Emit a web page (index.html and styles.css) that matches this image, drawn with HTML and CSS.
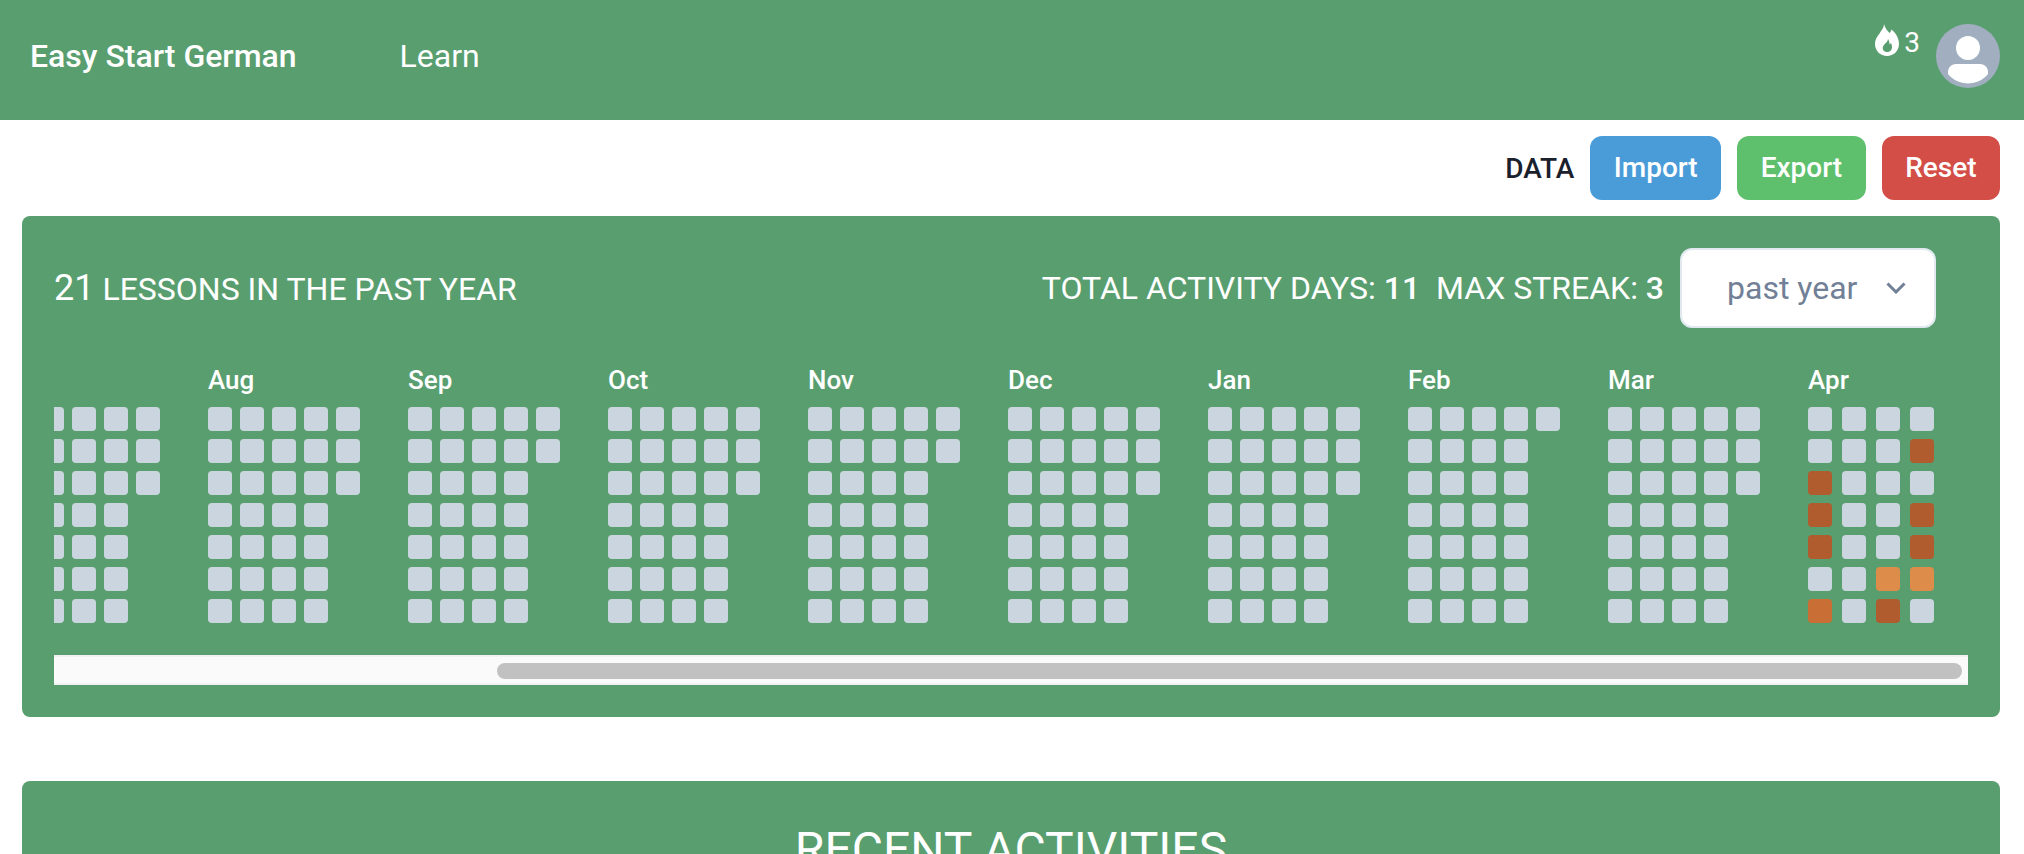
FILE: index.html
```html
<!DOCTYPE html>
<html lang="en">
<head>
  <meta charset="UTF-8" />
  <meta name="viewport" content="width=device-width, initial-scale=1.0"/>
  <title>Easy Start German</title>
  <link rel="stylesheet" href="styles.css">
</head>
<body>
  <header class="navbar">
    <div class="nav-left">
      <a class="brand">Easy Start German</a>
      <a class="nav-link">Learn</a>
    </div>
    <div class="nav-right">
      <div class="streak">
        <svg class="flame" viewBox="0 0 24 32" fill="#fff"><path fill-rule="evenodd" d="M9 0C10 4 12 6 14.500 9C15.500 8 16 7 16.500 5.500C20 8.500 24 13 24 20C24 27 18.500 32 12 32C5.500 32 0 27 0 20C0 14 4 11 6 7C7.500 5 9 3 9 0ZM13 15C13 18 9.500 19.500 8 22.500C7 25.500 9 28 12 28C15 28 17 26 17 23C17 21.500 16.500 20 15.800 19C15.400 19.800 15 20.200 14.500 20.500C14.500 18.500 14 16.500 13 15Z"/></svg>
        <span class="streak-count">3</span>
      </div>
      <div class="avatar">
        <svg viewBox="0 0 64 64"><circle cx="32" cy="24" r="12" fill="#fff"/><path fill="#fff" d="M20 40H44C49 40 52 44 52 48V50C47 56 40 59.500 32 59.500C24 59.500 17 56 12 50V48C12 44 15 40 20 40Z"/></svg>
      </div>
    </div>
  </header>

  <main class="content">
    <div class="data-bar">
      <span class="data-label">DATA</span>
      <button class="btn btn-import">Import</button>
      <button class="btn btn-export">Export</button>
      <button class="btn btn-reset">Reset</button>
    </div>

    <section class="panel heatmap">
      <div class="heatmap-head">
        <div class="heatmap-title"><b>21</b> LESSONS IN THE PAST YEAR</div>
        <div class="heatmap-stats">
          <span>TOTAL ACTIVITY DAYS: <b>11</b></span>
          <span>MAX STREAK: <b>3</b></span>
          <div class="range-select">
            <span>past year</span>
            <svg class="chevron" viewBox="0 0 20 12" fill="none" stroke="#718096" stroke-width="3"><path d="M1.500 1.500L10 10L18.500 1.500"/></svg>
          </div>
        </div>
      </div>

      <div class="months">
        <div class="month month-partial">
          <div class="month-name"></div>
          <div class="days"><span class="day"></span><span class="day"></span><span class="day"></span><span class="day"></span><span class="day"></span><span class="day"></span><span class="day"></span><span class="day"></span><span class="day"></span><span class="day"></span><span class="day"></span><span class="day"></span><span class="day"></span><span class="day"></span><span class="day"></span><span class="day"></span><span class="day"></span><span class="day"></span><span class="day"></span><span class="day"></span><span class="day"></span><span class="day"></span><span class="day"></span><span class="day"></span><span class="day"></span><span class="day"></span><span class="day"></span><span class="day"></span><span class="day"></span><span class="day"></span><span class="day"></span></div>
        </div>
        <div class="month">
          <div class="month-name">Aug</div>
          <div class="days"><span class="day"></span><span class="day"></span><span class="day"></span><span class="day"></span><span class="day"></span><span class="day"></span><span class="day"></span><span class="day"></span><span class="day"></span><span class="day"></span><span class="day"></span><span class="day"></span><span class="day"></span><span class="day"></span><span class="day"></span><span class="day"></span><span class="day"></span><span class="day"></span><span class="day"></span><span class="day"></span><span class="day"></span><span class="day"></span><span class="day"></span><span class="day"></span><span class="day"></span><span class="day"></span><span class="day"></span><span class="day"></span><span class="day"></span><span class="day"></span><span class="day"></span></div>
        </div>
        <div class="month">
          <div class="month-name">Sep</div>
          <div class="days"><span class="day"></span><span class="day"></span><span class="day"></span><span class="day"></span><span class="day"></span><span class="day"></span><span class="day"></span><span class="day"></span><span class="day"></span><span class="day"></span><span class="day"></span><span class="day"></span><span class="day"></span><span class="day"></span><span class="day"></span><span class="day"></span><span class="day"></span><span class="day"></span><span class="day"></span><span class="day"></span><span class="day"></span><span class="day"></span><span class="day"></span><span class="day"></span><span class="day"></span><span class="day"></span><span class="day"></span><span class="day"></span><span class="day"></span><span class="day"></span></div>
        </div>
        <div class="month">
          <div class="month-name">Oct</div>
          <div class="days"><span class="day"></span><span class="day"></span><span class="day"></span><span class="day"></span><span class="day"></span><span class="day"></span><span class="day"></span><span class="day"></span><span class="day"></span><span class="day"></span><span class="day"></span><span class="day"></span><span class="day"></span><span class="day"></span><span class="day"></span><span class="day"></span><span class="day"></span><span class="day"></span><span class="day"></span><span class="day"></span><span class="day"></span><span class="day"></span><span class="day"></span><span class="day"></span><span class="day"></span><span class="day"></span><span class="day"></span><span class="day"></span><span class="day"></span><span class="day"></span><span class="day"></span></div>
        </div>
        <div class="month">
          <div class="month-name">Nov</div>
          <div class="days"><span class="day"></span><span class="day"></span><span class="day"></span><span class="day"></span><span class="day"></span><span class="day"></span><span class="day"></span><span class="day"></span><span class="day"></span><span class="day"></span><span class="day"></span><span class="day"></span><span class="day"></span><span class="day"></span><span class="day"></span><span class="day"></span><span class="day"></span><span class="day"></span><span class="day"></span><span class="day"></span><span class="day"></span><span class="day"></span><span class="day"></span><span class="day"></span><span class="day"></span><span class="day"></span><span class="day"></span><span class="day"></span><span class="day"></span><span class="day"></span></div>
        </div>
        <div class="month">
          <div class="month-name">Dec</div>
          <div class="days"><span class="day"></span><span class="day"></span><span class="day"></span><span class="day"></span><span class="day"></span><span class="day"></span><span class="day"></span><span class="day"></span><span class="day"></span><span class="day"></span><span class="day"></span><span class="day"></span><span class="day"></span><span class="day"></span><span class="day"></span><span class="day"></span><span class="day"></span><span class="day"></span><span class="day"></span><span class="day"></span><span class="day"></span><span class="day"></span><span class="day"></span><span class="day"></span><span class="day"></span><span class="day"></span><span class="day"></span><span class="day"></span><span class="day"></span><span class="day"></span><span class="day"></span></div>
        </div>
        <div class="month">
          <div class="month-name">Jan</div>
          <div class="days"><span class="day"></span><span class="day"></span><span class="day"></span><span class="day"></span><span class="day"></span><span class="day"></span><span class="day"></span><span class="day"></span><span class="day"></span><span class="day"></span><span class="day"></span><span class="day"></span><span class="day"></span><span class="day"></span><span class="day"></span><span class="day"></span><span class="day"></span><span class="day"></span><span class="day"></span><span class="day"></span><span class="day"></span><span class="day"></span><span class="day"></span><span class="day"></span><span class="day"></span><span class="day"></span><span class="day"></span><span class="day"></span><span class="day"></span><span class="day"></span><span class="day"></span></div>
        </div>
        <div class="month">
          <div class="month-name">Feb</div>
          <div class="days"><span class="day"></span><span class="day"></span><span class="day"></span><span class="day"></span><span class="day"></span><span class="day"></span><span class="day"></span><span class="day"></span><span class="day"></span><span class="day"></span><span class="day"></span><span class="day"></span><span class="day"></span><span class="day"></span><span class="day"></span><span class="day"></span><span class="day"></span><span class="day"></span><span class="day"></span><span class="day"></span><span class="day"></span><span class="day"></span><span class="day"></span><span class="day"></span><span class="day"></span><span class="day"></span><span class="day"></span><span class="day"></span><span class="day"></span></div>
        </div>
        <div class="month">
          <div class="month-name">Mar</div>
          <div class="days"><span class="day"></span><span class="day"></span><span class="day"></span><span class="day"></span><span class="day"></span><span class="day"></span><span class="day"></span><span class="day"></span><span class="day"></span><span class="day"></span><span class="day"></span><span class="day"></span><span class="day"></span><span class="day"></span><span class="day"></span><span class="day"></span><span class="day"></span><span class="day"></span><span class="day"></span><span class="day"></span><span class="day"></span><span class="day"></span><span class="day"></span><span class="day"></span><span class="day"></span><span class="day"></span><span class="day"></span><span class="day"></span><span class="day"></span><span class="day"></span><span class="day"></span></div>
        </div>
        <div class="month month-last">
          <div class="month-name">Apr</div>
          <div class="days">
            <span class="day"></span><span class="day"></span><span class="day level-3"></span><span class="day level-3"></span><span class="day level-3"></span><span class="day"></span><span class="day level-2"></span>
            <span class="day"></span><span class="day"></span><span class="day"></span><span class="day"></span><span class="day"></span><span class="day"></span><span class="day"></span>
            <span class="day"></span><span class="day"></span><span class="day"></span><span class="day"></span><span class="day"></span><span class="day level-1"></span><span class="day level-3"></span>
            <span class="day"></span><span class="day level-3"></span><span class="day"></span><span class="day level-3"></span><span class="day level-3"></span><span class="day level-1"></span><span class="day"></span>
          </div>
        </div>
      </div>

      <div class="scrollbar"><div class="scrollbar-thumb"></div></div>
    </section>

    <section class="panel activities">
      <h2 class="activities-title">RECENT ACTIVITIES</h2>
    </section>
  </main>
</body>
</html>
```

FILE: styles.css
```css
* {
  box-sizing: border-box;
}
html, body {
  height: 100%;
}
body {
  margin: 0;
  overflow: hidden;
  background: #fff;
  color: #fff;
  font-family: Roboto, sans-serif;
}
.navbar {
  display: flex;
  justify-content: space-between;
  height: 120px;
  padding: 24px 24px 0 30px;
  background: #599e6f;
}
.nav-left {
  display: flex;
  align-items: center;
  gap: 103px;
  height: 64px;
}
.brand {
  font-size: 32px;
  font-weight: 500;
}
.nav-link {
  font-size: 32px;
}
.nav-right {
  display: flex;
  align-items: flex-start;
  gap: 16px;
}
.streak {
  display: flex;
  align-items: center;
  gap: 5px;
  height: 32px;
  font-size: 28px;
}
.streak-count {
  padding-top: 4px;
}
.flame {
  width: 24px;
  height: 32px;
}
.avatar {
  width: 64px;
  height: 64px;
  border-radius: 50%;
  background: #a0aec0;
  overflow: hidden;
}
.content {
  padding: 0 24px 0 22px;
}
.data-bar {
  display: flex;
  align-items: center;
  justify-content: flex-end;
  gap: 16px;
  height: 64px;
  margin: 16px 0;
}
.data-label {
  color: #1a202c;
  font-size: 28px;
  font-weight: 500;
}
.btn {
  height: 64px;
  padding: 0 23.5px 2px;
  border: 0;
  border-radius: 12px;
  color: #fff;
  font-family: inherit;
  font-size: 28px;
  font-weight: 500;
}
.btn-import {
  background: #4a9cd8;
}
.btn-export {
  background: #5ec06c;
}
.btn-reset {
  background: #d44e48;
}
.panel {
  background: #599e6f;
  border-radius: 8px;
}
.heatmap {
  padding: 32px;
}
.heatmap-head {
  display: flex;
  align-items: center;
  justify-content: space-between;
  height: 80px;
  padding-right: 32px;
  font-size: 32px;
}
.heatmap-title b {
  font-size: 36px;
  font-weight: 400;
}
.heatmap-stats {
  display: flex;
  align-items: center;
  gap: 16px;
}
.heatmap-stats b {
  font-weight: 500;
}
.range-select {
  display: flex;
  align-items: center;
  justify-content: space-between;
  width: 256px;
  height: 80px;
  padding: 0 28px 0 45px;
  background: #fff;
  border: 2px solid #e2e8f0;
  border-radius: 12px;
  color: #718096;
}
.chevron {
  width: 20px;
  height: 12px;
}
.months {
  display: flex;
  justify-content: flex-end;
  gap: 48px;
  margin-top: 40px;
  padding-right: 34px;
}
.month {
  flex: none;
  width: 152px;
}
.month-partial {
  width: 106px;
  overflow: hidden;
}
.month-partial .days {
  margin-left: -46px;
}
.month-last {
  width: 126px;
}
.month-name {
  height: 24px;
  margin-bottom: 15px;
  font-size: 26px;
  font-weight: 500;
  line-height: 24px;
}
.days {
  display: grid;
  grid-auto-flow: column;
  grid-template-rows: repeat(7, 24px);
  grid-auto-columns: 24px;
  gap: 8px;
}
.month-last .days {
  column-gap: 10px;
}
.day {
  border-radius: 4px;
  background: #cbd5e0;
}
.level-1 {
  background: #dd8c4a;
}
.level-2 {
  background: #c96f35;
}
.level-3 {
  background: #b05c2f;
}
.scrollbar {
  display: flex;
  justify-content: flex-end;
  height: 30px;
  margin-top: 32px;
  padding: 6px;
  background: #fafafa;
  border-top: 2px solid #f1f1f1;
  border-bottom: 2px solid #f1f1f1;
}
.scrollbar-thumb {
  width: 1465px;
  height: 16px;
  border-radius: 8px;
  background: #c1c1c1;
}
.activities {
  height: 200px;
  margin-top: 64px;
  padding-top: 40px;
  text-align: center;
}
.activities-title {
  margin: 0;
  font-size: 48px;
  font-weight: 400;
}
```
